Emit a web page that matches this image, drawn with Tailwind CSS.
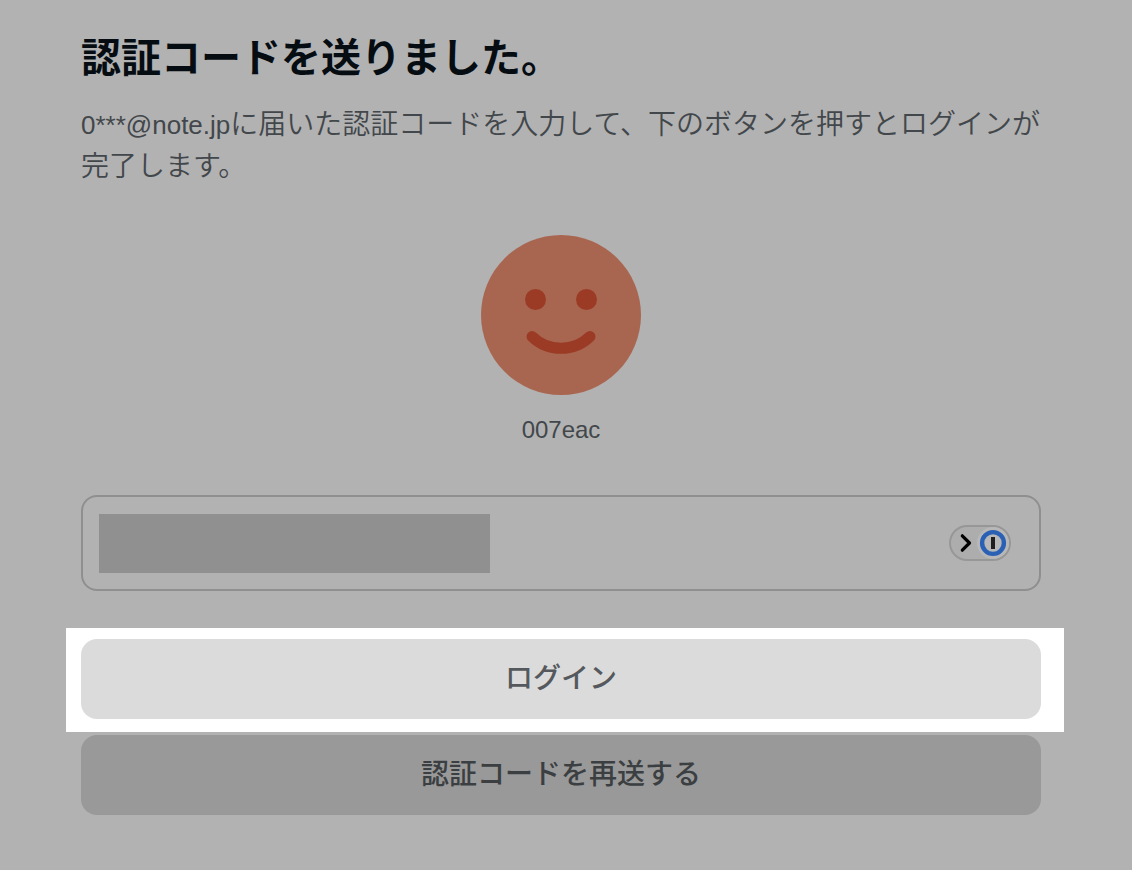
<!DOCTYPE html>
<html lang="ja">
<head>
    <meta charset="UTF-8">
    <meta name="viewport" content="width=device-width, initial-scale=1.0">
    <title>認証コードを送りました。</title>
    <script src="https://cdn.jsdelivr.net/npm/@tailwindcss/browser@4"></script>
</head>
<body class="bg-[#b2b2b2] min-h-screen font-['Liberation_Sans','Noto_Sans_CJK_JP',sans-serif] text-[#42474b]">
    <main class="pt-7 pb-14 pl-[81px] pr-[91px]">
        <h1 class="text-[40px] leading-[60px] font-bold text-[#060d12]">認証コードを送りました。</h1>
        <p class="mt-4 -mr-4 text-[28px] leading-[42px] font-[350]"><span class="text-[26px]">0***@note.jp</span>に届いた認証コードを入力して、下のボタンを押すとログインが完了します。</p>

        <!-- Account -->
        <div class="mt-[47px] flex flex-col items-center gap-[17px]">
            <svg class="size-40" viewBox="0 0 160 160" fill="none" aria-hidden="true">
                <circle cx="80" cy="80" r="80" fill="#a86650"></circle>
                <circle cx="54.5" cy="64.5" r="10.5" fill="#9b3b26"></circle>
                <circle cx="105.5" cy="64.5" r="10.5" fill="#9b3b26"></circle>
                <path d="M51 101.5C67 117.3 93 117.3 109 101.5" stroke="#9b3b26" stroke-width="11" stroke-linecap="round"></path>
            </svg>
            <p class="text-2xl leading-9">007eac</p>
        </div>

        <form class="mt-[47px]">
            <!-- Code field -->
            <div class="flex h-24 items-center rounded-2xl border-2 border-[#8f8f8f] pl-4 pr-7">
                <div class="h-[59px] w-[391px] bg-[#909090]"></div>
                <input type="text" aria-label="認証コード" autocomplete="one-time-code" class="h-full min-w-0 flex-1 bg-transparent px-2 text-[28px] outline-none">
                <button type="button" aria-label="1Password" class="shrink-0">
                    <svg class="h-9 w-[62px]" viewBox="0 0 62 36" fill="none" aria-hidden="true">
                        <rect x="1" y="1" width="60" height="34" rx="17" fill="#adadad" stroke="#979797" stroke-width="2"></rect>
                        <circle cx="44" cy="18" r="16" fill="#b8b8b8"></circle>
                        <circle cx="44" cy="18" r="10.9" fill="#b8b8b8" stroke="#2b61b5" stroke-width="4.4"></circle>
                        <rect x="42" y="12" width="4" height="12" fill="#202020"></rect>
                        <path d="M13.3 10.8L20.5 18L13.3 25.2" stroke="#000" stroke-width="3.2" stroke-linecap="round" stroke-linejoin="round"></path>
                    </svg>
                </button>
            </div>

            <!-- Highlighted login button -->
            <div class="mt-[37px] -ml-[15px] -mr-[23px] bg-white pt-[11px] pr-[23px] pb-[13px] pl-[15px]">
                <button type="submit" class="block h-20 w-full rounded-2xl bg-[#dbdbdb] text-[28px] leading-[42px] font-medium text-[#55595d]">ログイン</button>
            </div>
            <button type="button" class="mt-[3px] block h-20 w-full rounded-2xl bg-[#999999] text-[28px] leading-[42px] font-medium text-[#3b3f42]">認証コードを再送する</button>
        </form>
    </main>
</body>
</html>
